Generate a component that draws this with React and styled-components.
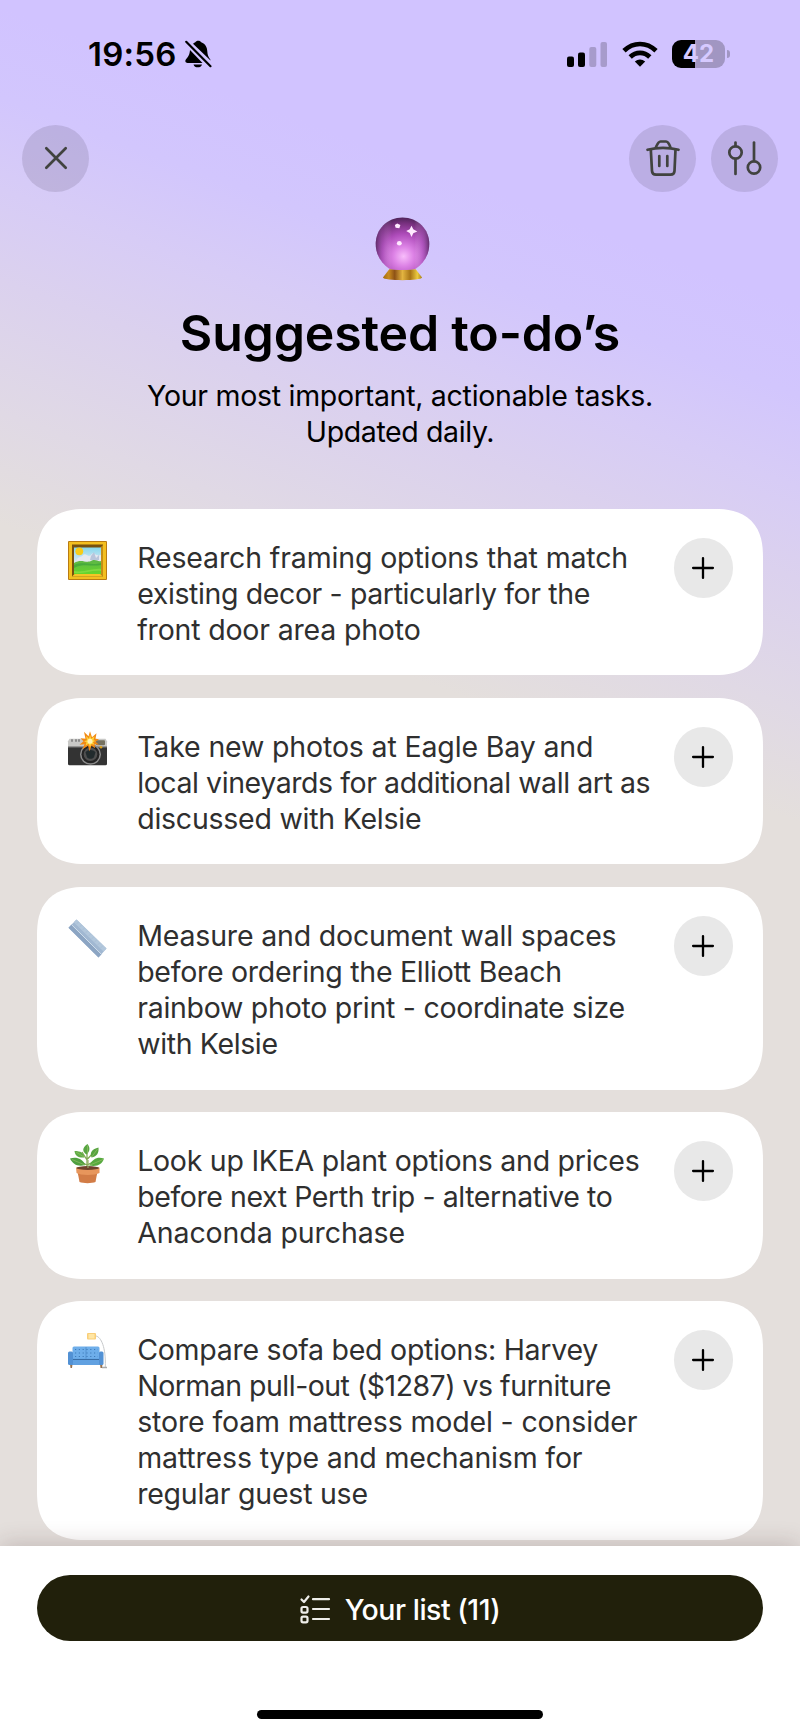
import React from "react";
import styled, { createGlobalStyle } from "styled-components";

const Global = createGlobalStyle`
  * { box-sizing: border-box; }
  body { margin: 0; background: #e4dfdb; }
  svg { display: block; flex: none; overflow: visible; }
`;

const Screen = styled.main`
  width: 800px;
  height: 1734px;
  overflow: hidden;
  display: flex;
  flex-direction: column;
  font-family: Inter, "Liberation Sans", sans-serif;
  color: #000;
  background: linear-gradient(200.5deg, #d1c3ff 15%, #d2c6fd 19.5%, #d7ccf6 24%, #dbd1ee 28.5%, #e0d9e5 35%, #e4dfdc 40.5%);
`;

const StatusBar = styled.header`
  height: 108px;
  flex: none;
  padding: 0 70px 0 88px;
  display: flex;
  justify-content: space-between;
`;

const StatusGroup = styled.div`
  height: 108px;
  display: flex;
  align-items: center;
  gap: ${(p) => p.$gap}px;
`;

const Clock = styled.span`
  font-size: 33px;
  line-height: 40px;
  font-weight: 600;
  letter-spacing: ${(p) => p.$spacing}px;
  white-space: nowrap;
`;

const Battery = styled.div`
  width: 53px;
  height: 28px;
  border-radius: 9px;
  margin-right: 5px;
  background: linear-gradient(90deg, #000 0 23px, #a196c2 23px);
  color: #d6caff;
  font-size: 24px;
  line-height: 28px;
  font-weight: 700;
  text-align: center;
  position: relative;
  &::after {
    content: "";
    position: absolute;
    right: -5px;
    top: 10px;
    width: 3px;
    height: 8px;
    border-radius: 0 4px 4px 0;
    background: #a196c2;
  }
`;

const Toolbar = styled.nav`
  padding: 16.5px 22px 0;
  height: 84px;
  flex: none;
  display: flex;
  justify-content: space-between;
`;

const ToolGroup = styled.div`
  display: flex;
  gap: 15px;
`;

const RoundButton = styled.button`
  width: ${(p) => p.$size}px;
  height: ${(p) => p.$size}px;
  flex: none;
  padding: 0;
  border: 0;
  border-radius: 50%;
  display: flex;
  align-items: center;
  justify-content: center;
  background: ${(p) => p.$bg};
`;

const Hero = styled.section`
  height: 317px;
  flex: none;
  padding-top: 25px;
  display: flex;
  flex-direction: column;
  align-items: center;
  text-align: center;
`;

const Orb = styled.div`
  padding-left: 5px;
`;

const Title = styled.h1`
  margin: 22px 0 0;
  font-size: 50px;
  line-height: 60px;
  font-weight: 600;
  letter-spacing: -0.17px;
  white-space: nowrap;
`;

const Subtitle = styled.p`
  margin: 15px 0 0;
  font-size: 28.5px;
  line-height: 36px;
`;

const Line = styled.span`
  display: block;
  white-space: nowrap;
  letter-spacing: ${(p) => p.$spacing || 0}px;
`;

const List = styled.ul`
  list-style: none;
  margin: 0;
  padding: 0 37px;
  height: 1036.5px;
  flex: none;
  display: flex;
  flex-direction: column;
  gap: 22.7px;
`;

const Card = styled.li`
  flex: none;
  padding: 29.2px 30px 29.2px 31px;
  border-radius: 40px;
  background: #fff;
  display: flex;
  align-items: flex-start;
  @supports (corner-shape: superellipse(1.3)) {
    border-radius: 48px;
    corner-shape: superellipse(1.3);
  }
`;

const EmojiSlot = styled.div`
  width: 39px;
  height: 39px;
  margin: 3px 30.2px 0 0;
  flex: none;
`;

const TaskText = styled.p`
  margin: 0 0 -2px;
  padding-top: 2px;
  flex: 1;
  font-size: 28.5px;
  line-height: 36px;
  color: #2f2f2f;
`;

const Footer = styled.footer`
  flex: 1;
  padding: 29.5px 37px 15px;
  background: #fff;
  box-shadow: 0 -2px 22px rgba(60, 30, 30, 0.2);
  display: flex;
  flex-direction: column;
  align-items: center;
  justify-content: space-between;
  position: relative;
`;

const ListButton = styled.button`
  width: 726px;
  height: 66px;
  padding: 3px 0 0;
  border: 0;
  border-radius: 33px;
  background: #21200b;
  color: #fff;
  font: 500 28.5px/36px Inter, sans-serif;
  display: flex;
  align-items: center;
  justify-content: center;
  gap: 15px;
`;

const HomeBar = styled.div`
  width: 286px;
  height: 9px;
  border-radius: 5px;
  background: #000;
`;

const ink = { fill: "none", stroke: "#41433f", strokeWidth: 2.7, strokeLinecap: "round", strokeLinejoin: "round" };

const BellOff = () => (
  <svg width="27" height="28" viewBox="0 0 27 28">
    <path d="M5 10 17.500 23H2.500C.5 23-.3 21 1 19.300 3.500 16.500 4.600 14.500 5 10Z" />
    <path d="M8 3.800C9 3 9.800 2.600 10.300 2.300 11 .2 15.500.2 16.200 2.300 20.500 4 22.200 7.500 22.300 11.500 22.500 15 23.500 17 25.300 19.500L25.500 20.500Z" />
    <path d="M8.500 24.500H17C16.200 28.300 9.300 28.300 8.500 24.500Z" />
    <path d="M1.200 1.800 25.500 26.200" stroke="#000" strokeWidth="2.200" strokeLinecap="round" />
  </svg>
);

const Signal = () => (
  <svg width="40" height="26" viewBox="0 0 40 26">
    <rect x="0" y="15.500" width="7" height="10.500" rx="2" />
    <rect x="11" y="11.500" width="7" height="14.500" rx="2" />
    <rect x="22.300" y="6" width="7" height="20" rx="2" fill="#a79bcb" />
    <rect x="33.500" y="1" width="6.500" height="25" rx="2" fill="#a79bcb" />
  </svg>
);

const Wifi = () => (
  <svg width="36" height="26" viewBox="0 0 36 26">
    <g fill="none" stroke="#000" strokeWidth="4.700">
      <path d="M2 9.800C11.300.7 24.700.7 34 9.800" />
      <path d="M8.200 16C13.800 10.500 22.200 10.500 27.800 16" />
    </g>
    <path d="M12.800 20.600C16 17.800 20 17.800 23.200 20.600L18 25.800Z" />
  </svg>
);

const CloseIcon = () => (
  <svg width="24" height="24" viewBox="0 0 24 24">
    <path d="M2.300 2.300 21.700 21.700M21.700 2.300 2.300 21.700" {...ink} />
  </svg>
);

const TrashIcon = () => (
  <svg width="34" height="36" viewBox="0 0 34 36">
    <g {...ink}>
      <path d="M1.500 9.800C12 7.300 22 7.300 32.500 9.800" />
      <path d="M10 7C11.200 4.300 12.500 1.500 14.500 1.500H20C22 1.500 23.300 4.300 24.300 7" />
      <path d="M4.800 9.500 6 31C6.100 33.500 7.300 34.700 10 34.700H24.500C27.200 34.700 28.400 33.500 28.500 31L29.500 9.500" />
      <path d="M13.300 16V26M21.300 16V26" />
    </g>
  </svg>
);

const TuneIcon = () => (
  <svg width="34" height="34" viewBox="0 0 34 34">
    <g {...ink}>
      <circle cx="7.500" cy="11.500" r="6.200" />
      <path d="M7.500 1.500V5M7.500 18V33" />
      <circle cx="26" cy="26.500" r="6.200" />
      <path d="M26 1.500V20" />
    </g>
  </svg>
);

const PlusIcon = () => (
  <svg width="22" height="22" viewBox="0 0 22 22">
    <path d="M11 1.100V20.900M1.100 11H20.900" stroke="#000" strokeWidth="2.300" strokeLinecap="round" />
  </svg>
);

const ChecklistIcon = () => (
  <svg width="30" height="29" viewBox="0 0 30 29">
    <g fill="none" stroke="#eeeeea" strokeWidth="2.200" strokeLinecap="round" strokeLinejoin="round">
      <path d="M1.500 4.500 4 7 8.500 1.500M13 4.200H29M13 14H29M13 24H29" />
      <rect x="1.500" y="12" width="6" height="5.600" rx="1.500" />
      <rect x="1.500" y="21.700" width="6" height="5.600" rx="1.500" />
    </g>
  </svg>
);

const CrystalBall = () => (
  <svg width="55" height="64" viewBox="0 0 52 65" preserveAspectRatio="none">
    <defs>
      <radialGradient id="orb" cx=".52" cy=".74" r=".74">
        <stop offset="0" stopColor="#f8bdfb" />
        <stop offset=".25" stopColor="#dd83e6" />
        <stop offset=".58" stopColor="#ad4bb9" />
        <stop offset=".85" stopColor="#78307f" />
        <stop offset="1" stopColor="#50245a" />
      </radialGradient>
      <linearGradient id="rim" x1="0" x2="1">
        <stop offset="0" stopColor="#54295f" stopOpacity=".75" />
        <stop offset=".14" stopColor="#a35bb5" stopOpacity=".25" />
        <stop offset=".3" stopColor="#fff" stopOpacity="0" />
        <stop offset=".72" stopColor="#fff" stopOpacity="0" />
        <stop offset=".86" stopColor="#bc6bd0" stopOpacity=".3" />
        <stop offset="1" stopColor="#54295f" stopOpacity=".75" />
      </linearGradient>
      <linearGradient id="gold" x1="0" x2="1">
        <stop offset="0" stopColor="#a36b10" />
        <stop offset=".15" stopColor="#c98b1f" />
        <stop offset=".3" stopColor="#8e5216" />
        <stop offset=".5" stopColor="#e3b440" />
        <stop offset=".7" stopColor="#a87416" />
        <stop offset=".88" stopColor="#ecca3f" />
        <stop offset="1" stopColor="#a8801a" />
      </linearGradient>
    </defs>
    <path d="M13.500 53H38.500L44.500 61.500C44.500 65 7.500 65 7.500 61.500Z" fill="url(#gold)" />
    <path d="M26 .5C40.500.5 51.300 12.500 51.300 27.500 51.300 38.500 46 47 38.500 52.500 33 54.300 19 54.300 13.500 52.500 6 47 .7 38.500.7 27.500.7 12.500 11.500.5 26 .5Z" fill="url(#orb)" />
    <path d="M26 .5C40.500.5 51.300 12.500 51.300 27.500 51.300 38.500 46 47 38.500 52.500 33 54.300 19 54.300 13.500 52.500 6 47 .7 38.500.7 27.500.7 12.500 11.500.5 26 .5Z" fill="url(#rim)" />
    <g fill="#ffeaff">
      <path d="M34.500 9 36.200 12.500 40 14.700 36.200 16.500 34.500 20.300 32.800 16.300 29.500 14.300 32.800 12.500Z" />
      <path d="M21 6.500 24 8 23 11.500 19.500 11 18.800 8.200Z" />
      <circle cx="23" cy="26.700" r="2.300" />
    </g>
  </svg>
);

const Frame = () => (
  <svg width="39" height="39" viewBox="0 0 39 39">
    <defs>
      <linearGradient id="sky" x2="0" y2="1">
        <stop offset="0" stopColor="#86d7ed" />
        <stop offset=".55" stopColor="#dce8f2" />
      </linearGradient>
      <linearGradient id="grass" x2="0" y2="1">
        <stop offset="0" stopColor="#5eb548" />
        <stop offset="1" stopColor="#65d62b" />
      </linearGradient>
    </defs>
    <rect width="39" height="39" rx="1" fill="#b97b12" />
    <rect x="1" y="1" width="37" height="37" fill="#f3bf20" />
    <rect x="4" y="3.500" width="31" height="32" fill="#77500f" />
    <path d="M4 35.500 6.500 33H32.500L35 35.500Z" fill="#f4c526" />
    <path d="M35 4 32.500 6.500V33L35 35.500Z" fill="#c58e16" />
    <rect x="6" y="6.500" width="27" height="26.500" fill="url(#sky)" />
    <path d="M9 19C10 15 13 17 15 14 18 11 20 17 23 14 26 10 27 16 33 14V23H7Z" fill="#e6e8f0" />
    <path d="M23 15 26 11 28 17 31 14V19H22Z" fill="#b8c5db" />
    <path d="M6 22C14 17 18 23 24 19.500 28 18 30 21 33 20V33H6Z" fill="url(#grass)" />
    <path d="M6 24C16 20 23 25 33 22V24C23 26 16 22 6 27Z" fill="#379c3a" opacity=".6" />
    <path d="M6 30C15 32 25 27 33 28V30C24 29 16 33 6 32Z" fill="#90e34b" opacity=".6" />
    <circle cx="11.300" cy="10.300" r="3.900" fill="#f8cc18" />
  </svg>
);

const Camera = () => (
  <svg width="39" height="39" viewBox="0 -2.300 39 39">
    <rect x="0" y="9" width="39" height="24" rx="1.500" fill="#333" />
    <path d="M1.500 6.500H37.500L39 9V14.500H0V9Z" fill="#c9c9c7" />
    <path d="M4 7V9.500M8 7V9.500M11 7V9.500" stroke="#777" strokeWidth="1.500" />
    <rect x="28" y="8" width="9" height="5" rx="1" fill="#767260" />
    <path d="M0 15H39" stroke="#626262" />
    <circle cx="22.500" cy="22" r="10.500" fill="#8b8b8b" />
    <circle cx="22.500" cy="22" r="9" fill="#242424" />
    <circle cx="22.500" cy="22" r="6.800" fill="#4f4f4f" />
    <path d="M17.500 20C20 17 25 17 27.500 20L26 25C24 27 21 27 19 25Z" fill="#222b2d" />
    <circle cx="33" cy="15" r="1.300" fill="#dba11c" />
    <path d="M22-1 24 5 28.500 1 27.500 6.500 31 7 27.500 9.500 31 12.500 26.500 12 27 16 23.500 13.500 21.500 19 20 13.500 14.500 17 16.500 12 11.500 12.500 15.500 9 12.500 6 17.500 6.500 16-.5 20.500 4Z" fill="#f28a13" />
    <path d="M22 2 23.200 6.500 26.500 4 25.500 8 27.500 8.500 25 10 26.500 12.500 23.500 11.800 22 15 20.500 11.500 17.500 13.500 18.500 10 16 9 19 8 18 3.500 21 6.500Z" fill="#ffd43a" />
    <circle cx="22" cy="9" r="2.500" fill="#fff4b7" />
  </svg>
);

const Ruler = () => (
  <svg width="39" height="39" viewBox="0 0 39 39">
    <path d="M8.500.5 38.500 29.500 30.500 38.500.5 8.800Z" fill="#a1b8d2" />
    <path d="M8.500.5 38.500 29.500 35.500 32.500 5.800 3.200Z" fill="#b2c7dc" />
    <path d="M3.500 5.600 33.400 35.300 30.500 38.500.5 8.800Z" fill="#8ca5c3" />
    <path d="M3.500 5.600 33.400 35.300" stroke="#d0deea" strokeWidth="1" />
    <path d="M10 3.500 9 4.500M13 6.500 12 7.500M16 9.500 15 10.500M19 12.500 18 13.500M22 15.500 21 16.500M25 18.500 24 19.500M28 21.500 27 22.500M31 24.500 30 25.500M34 27.500 33 28.500" stroke="#8fa6c1" strokeWidth=".5" />
  </svg>
);

const Plant = () => (
  <svg width="39" height="39" viewBox="0 0 39 39">
    <path d="M19 24V9M19 21 9 16M19 21 29 16M19 16 14 8M19.500 15 26 8" fill="none" stroke="#80a953" strokeWidth="1.300" />
    <path d="M19.500 0C13.500 4 14.500 8 18.500 10.500 22.500 7 22 3 19.500 0Z" fill="#57a642" />
    <path d="M6.500 7C13 7 15.500 9 16.500 13.500 10.500 14 7 12 6.500 7Z" fill="#5fac45" />
    <path d="M30.500 3.500C24 5 21.500 8.500 23.500 13.500 29 12.500 31 9 30.500 3.500Z" fill="#56a33f" />
    <path d="M2 14.500C9 12.500 14 15 17.500 21 9.500 23 5 20.500 2 14.500Z" fill="#4f9f40" />
    <path d="M36 14.500C29 12.500 25 15 21 21.500 29.500 23 34 20.500 36 14.500Z" fill="#57a93f" />
    <path d="M4 15.500 17 21M35 15.500 22 21M19.500 1.500V10M8 8 16 13M29.500 5 23.700 13" stroke="#93be63" strokeWidth=".7" />
    <path d="M9 25 11.500 38C15 39.500 24 39.500 27.500 38L30 25Z" fill="#d27c46" />
    <path d="M8 23.500H31.500V29C27 31.500 12.500 31.500 8.500 29Z" fill="#e7965c" />
    <ellipse cx="19.750" cy="24" rx="11.300" ry="1.900" fill="#70412c" />
    <path d="M20 24V16" stroke="#8faa62" strokeWidth="1.200" />
  </svg>
);

const Sofa = () => (
  <svg width="39" height="39" viewBox="0 0 39 39">
    <path d="M28 3C33 4 38 14 37.300 34" fill="none" stroke="#c7c9cb" strokeWidth="1" />
    <path d="M34 34.500H39" stroke="#aaa" strokeWidth="1.500" />
    <rect x="19" y="0" width="9" height="6.500" rx="1" fill="#f9ce79" />
    <rect x="20.500" y="1" width="6" height="4.500" fill="#ffe6a4" />
    <path d="M2 31H4.500L4 35H2.500ZM32 31H34.500L34 35H32.500Z" fill="#97714f" />
    <rect x="4.500" y="13.500" width="27" height="14" rx="1.500" fill="#6eaeea" />
    <path d="M18 14V26" stroke="#4d8cca" strokeWidth=".8" />
    <path d="M7 16.500H30M7 20H30M7 23.500H30" stroke="#3f7cba" strokeWidth="1.200" strokeDasharray="1.200 2.600" />
    <rect x="4" y="25.500" width="28" height="6.500" fill="#61a1e1" />
    <rect x="0" y="18.500" width="5" height="13.500" rx="1.500" fill="#5291d4" />
    <rect x="31" y="18.500" width="4.500" height="13.500" rx="1.500" fill="#5291d4" />
    <path d="M5 26.500H31" stroke="#34699f" strokeWidth=".9" />
  </svg>
);

const tasks = [
  { icon: Frame, lines: [["Research framing options that match", -0.14], ["existing decor - particularly for the", -0.39], ["front door area photo", -0.18]] },
  { icon: Camera, lines: [["Take new photos at Eagle Bay and", -0.15], ["local vineyards for additional wall art as", -0.43], ["discussed with Kelsie", -0.24]] },
  { icon: Ruler, lines: [["Measure and document wall spaces", -0.18], ["before ordering the Elliott Beach", -0.28], ["rainbow photo print - coordinate size", -0.27], ["with Kelsie", -0.37]] },
  { icon: Plant, lines: [["Look up IKEA plant options and prices", -0.26], ["before next Perth trip - alternative to", -0.42], ["Anaconda purchase", -0.1]] },
  { icon: Sofa, lines: [["Compare sofa bed options: Harvey", -0.26], ["Norman pull-out ($1287) vs furniture", -0.52], ["store foam mattress model - consider", -0.14], ["mattress type and mechanism for", -0.16], ["regular guest use", -0.24]] },
];

const glass = "rgba(100, 90, 120, 0.2)";

export default function App() {
  return (
    <Screen>
      <Global />
      <StatusBar>
        <StatusGroup $gap={8}>
          <Clock $spacing={0.25}>19:56</Clock>
          <BellOff />
        </StatusGroup>
        <StatusGroup $gap={14.5}>
          <Signal />
          <Wifi />
          <Battery>42</Battery>
        </StatusGroup>
      </StatusBar>
      <Toolbar>
        <RoundButton $size={67} $bg={glass} aria-label="Close"><CloseIcon /></RoundButton>
        <ToolGroup>
          <RoundButton $size={67} $bg={glass} aria-label="Delete"><TrashIcon /></RoundButton>
          <RoundButton $size={67} $bg={glass} aria-label="Filter"><TuneIcon /></RoundButton>
        </ToolGroup>
      </Toolbar>
      <Hero>
        <Orb><CrystalBall /></Orb>
        <Title>Suggested to-do’s</Title>
        <Subtitle>
          <Line $spacing={-0.28}>Your most important, actionable tasks.</Line>
          <Line $spacing={-0.38}>Updated daily.</Line>
        </Subtitle>
      </Hero>
      <List>
        {tasks.map(({ icon: Icon, lines }) => (
          <Card key={lines[0][0]}>
            <EmojiSlot><Icon /></EmojiSlot>
            <TaskText>
              {lines.map(([text, spacing]) => (
                <Line key={text} $spacing={spacing}>{text}</Line>
              ))}
            </TaskText>
            <RoundButton $size={59.5} $bg="#e8e8e8" aria-label="Add"><PlusIcon /></RoundButton>
          </Card>
        ))}
      </List>
      <Footer>
        <ListButton>
          <ChecklistIcon />
          <Line $spacing={-0.47}>Your list (11)</Line>
        </ListButton>
        <HomeBar />
      </Footer>
    </Screen>
  );
}
